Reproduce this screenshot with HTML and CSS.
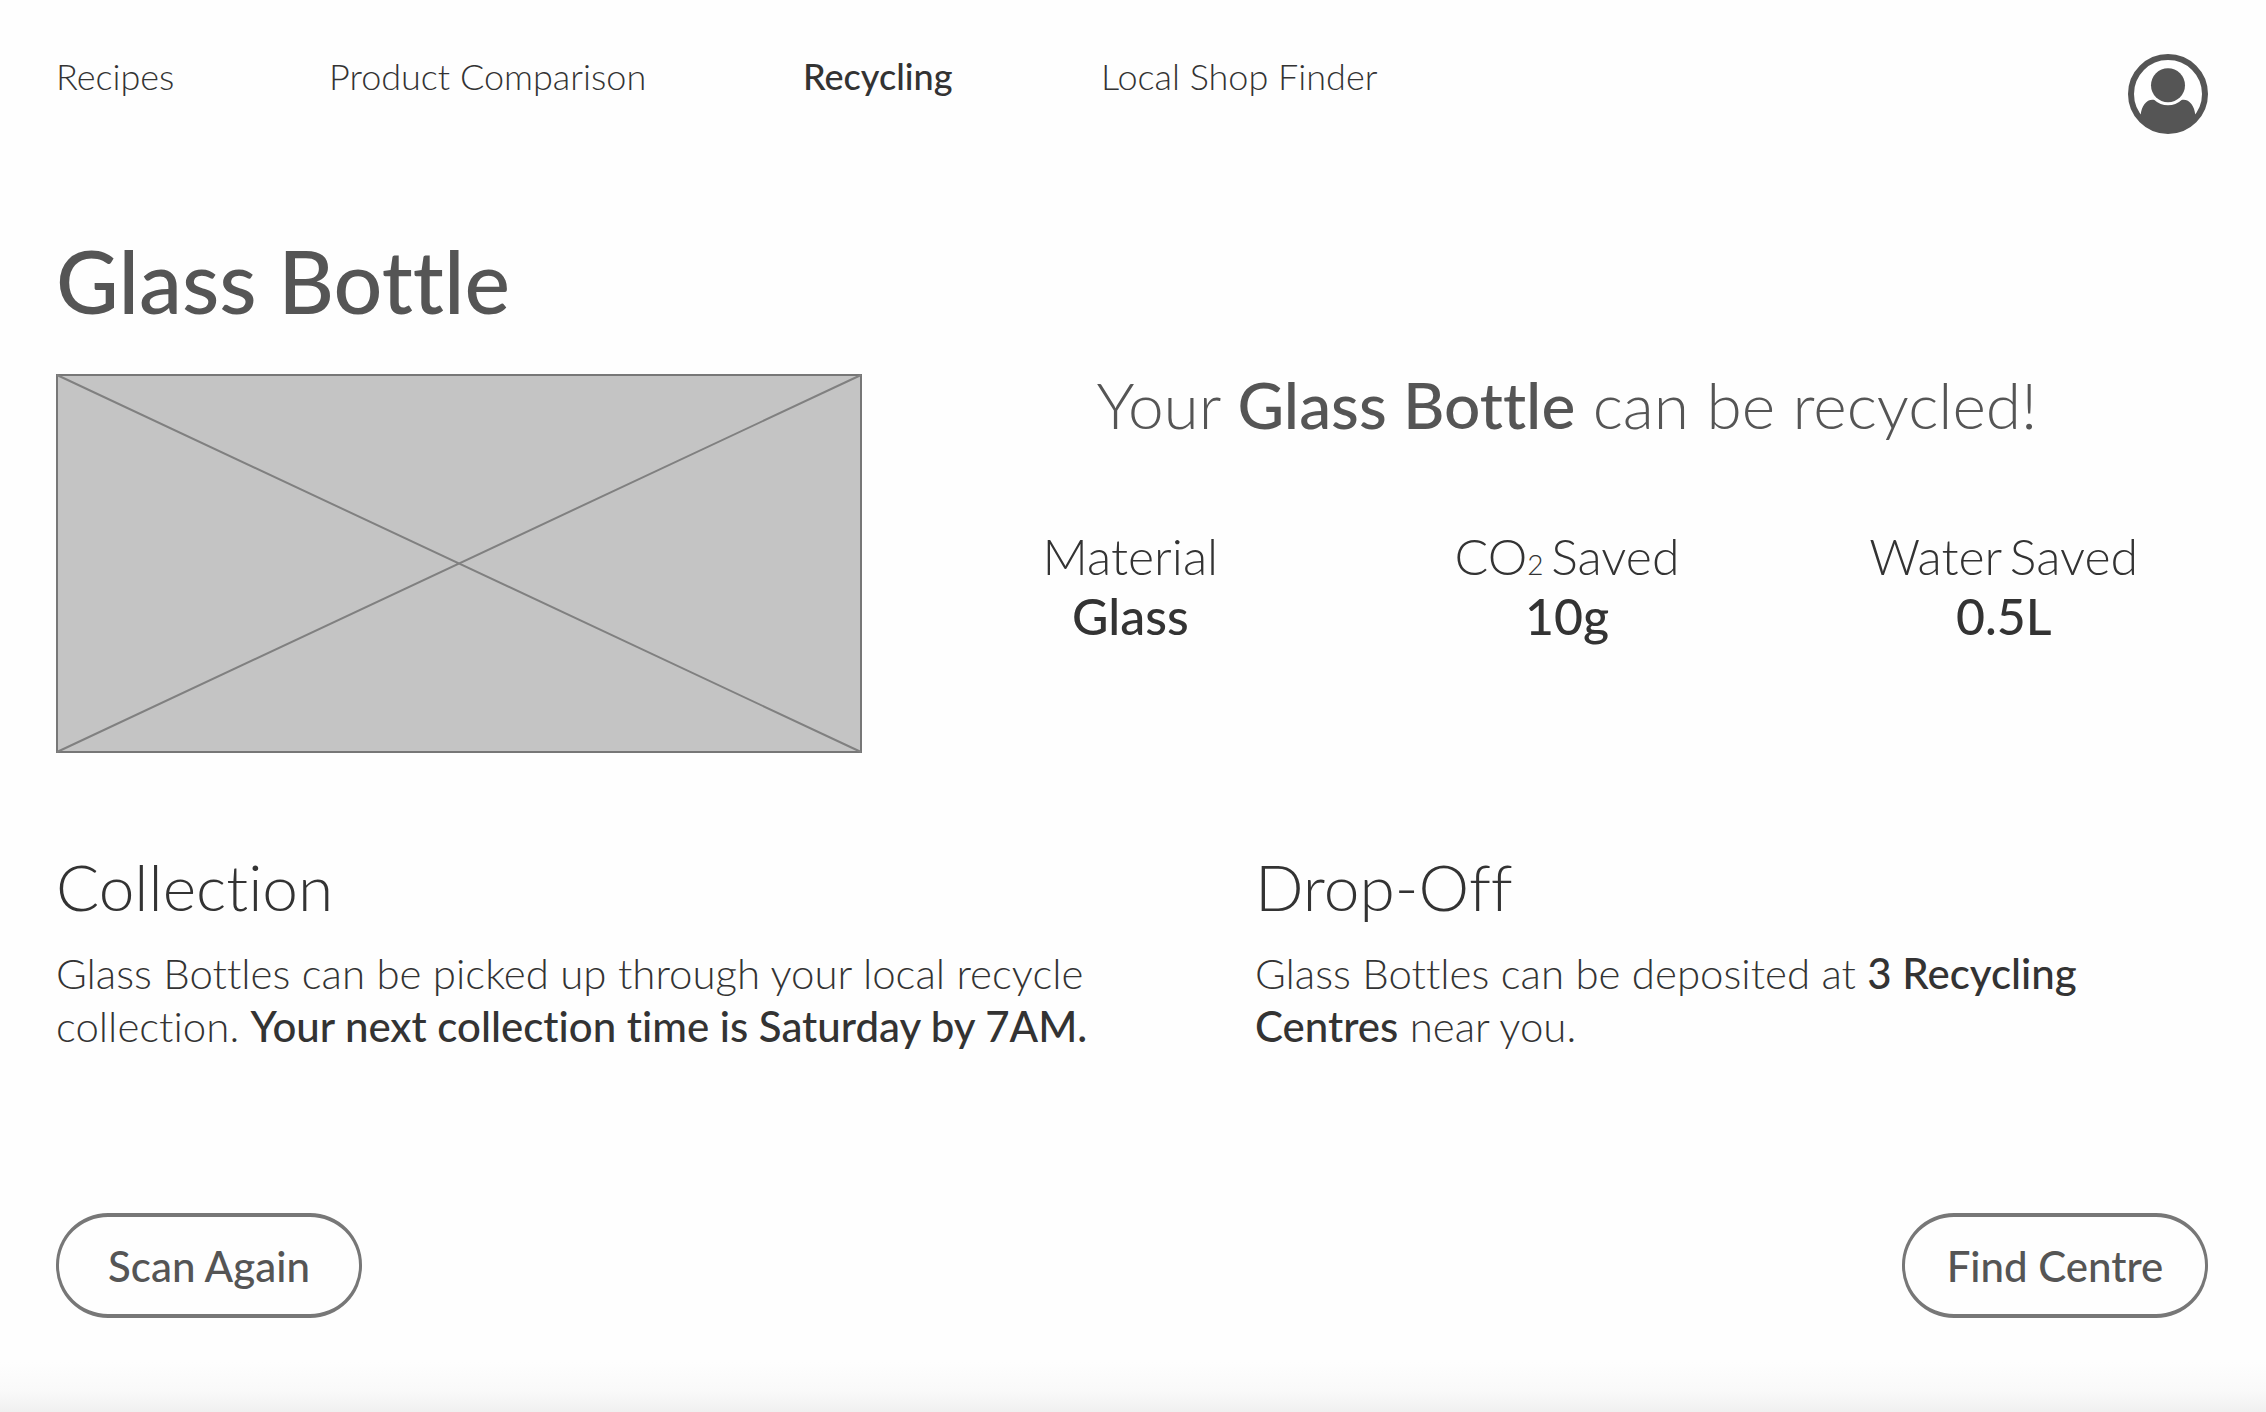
FILE: index.html
```html
<!DOCTYPE html>
<html lang="en">
<head>
<meta charset="utf-8">
<title>Recycling – Glass Bottle</title>
<link rel="stylesheet" href="styles.css">
</head>
<body>
<div class="page">
  <header class="topbar">
    <nav class="nav" aria-label="Main">
      <a href="#recipes">Recipes</a>
      <a href="#comparison">Product Comparison</a>
      <a href="#recycling" class="current" aria-current="page">Recycling</a>
      <a href="#shops">Local Shop Finder</a>
    </nav>
    <button class="profile" type="button" aria-label="Profile">
      <svg viewBox="0 0 80 80" aria-hidden="true">
        <defs><clipPath id="disc"><circle cx="40" cy="40" r="37"/></clipPath></defs>
        <circle cx="40" cy="40" r="37" fill="#fff" stroke="#555" stroke-width="6"/>
        <path clip-path="url(#disc)" fill="#555" d="M0 80L12.7 61C13.5 51 19.5 44.5 26.4 46A20 20 0 0 0 53.6 46C60.5 44.5 66.5 51 67.3 61L80 80Z"/>
        <circle cx="40" cy="31.3" r="17" fill="#555"/>
      </svg>
    </button>
  </header>
  <main>
    <h1>Glass Bottle</h1>
    <section class="summary">
      <svg class="photo" viewBox="0 0 806 379" preserveAspectRatio="none" role="img" aria-label="Glass bottle">
        <rect x="1" y="1" width="804" height="377"/>
        <path d="M1 1L805 378M805 1L1 378"/>
      </svg>
      <div class="result">
        <h2 class="verdict">Your <b>Glass Bottle</b> can be recycled!</h2>
        <dl class="facts">
          <div><dt>Material</dt><dd>Glass</dd></div>
          <div><dt>CO<span class="small">2 </span>Saved</dt><dd>10g</dd></div>
          <div><dt>Water<span class="small"> </span>Saved</dt><dd>0.5L</dd></div>
        </dl>
      </div>
    </section>
    <section class="options">
      <article>
        <h2>Collection</h2>
        <p>Glass Bottles can be picked up through your local recycle collection. <b>Your next collection time is Saturday by 7AM.</b></p>
      </article>
      <article>
        <h2>Drop-Off</h2>
        <p>Glass Bottles can be deposited at <b>3 Recycling Centres</b> near you.</p>
      </article>
    </section>
    <div class="actions">
      <button type="button">Scan Again</button>
      <button type="button">Find Centre</button>
    </div>
  </main>
</div>
</body>
</html>
```
FILE: styles.css
```css
* { box-sizing: border-box; }
body {
  margin: 0;
  color: #333;
  background: #fefefe;
  font-family: Lato, "Liberation Sans", sans-serif;
  font-weight: 300;
  font-variant-ligatures: none;
}
h1, h2, p, dl, dd { margin: 0; }
b { font-weight: 500; }
button { font-family: inherit; font-variant-ligatures: inherit; cursor: pointer; }
.page {
  min-height: 100vh;
  padding: 54px 58px 90px 56px;
  background: linear-gradient(to top, #f0f0f0, #f9f9f9 20px, #fefefe 50px);
}
.topbar { display: flex; justify-content: space-between; align-items: flex-start; }
.nav { display: grid; grid-template-columns: 273px 474px 298px auto; }
.nav a { color: inherit; text-decoration: none; font-size: 36px; line-height: 44px; }
.nav .current { font-weight: 500; }
.profile { width: 80px; height: 80px; padding: 0; border: 0; background: none; }
.profile svg { display: block; width: 100%; height: 100%; }
h1 { margin-top: 98px; font-size: 86px; line-height: 98px; font-weight: 500; color: #555; }
.summary { display: grid; grid-template-columns: 806px 1fr; column-gap: 64px; margin-top: 44px; }
.photo { display: block; width: 100%; height: 379px; fill: #c4c4c4; stroke: #777; stroke-width: 2; }
.photo path { stroke: #808080; }
.verdict { font-size: 64px; line-height: 62px; font-weight: 300; color: #555; text-align: center; }
.facts { display: grid; grid-template-columns: repeat(3, 1fr); column-gap: 28px; margin-top: 90px; text-align: center; font-size: 50px; line-height: 60px; }
.facts dd { font-weight: 500; }
.small { font-size: 28px; line-height: 1; }
.options { display: grid; grid-template-columns: 1079fr 953fr; column-gap: 120px; margin-top: 96px; }
.options h2 { font-size: 64px; line-height: 76px; font-weight: 300; }
.options p { margin-top: 22px; font-size: 42px; line-height: 53px; }
.actions { display: flex; justify-content: space-between; margin-top: 160px; }
.actions button { width: 306px; height: 105px; border: 3px solid #777; border-width: 4px 3px; border-radius: 52px; background: none; color: #555; font-size: 42px; font-weight: 500; }
```
